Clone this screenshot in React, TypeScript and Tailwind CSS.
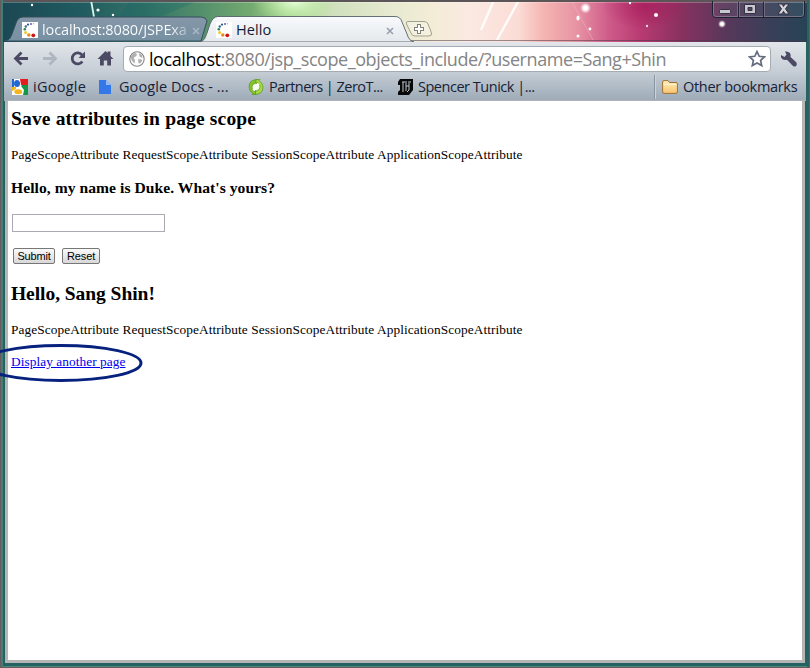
import React from "react";

const ui = "font-['Open_Sans','Noto_Sans',sans-serif] whitespace-nowrap";

function DotsIcon() {
  return (
    <svg width="16" height="16" viewBox="0 0 16 16" className="block shrink-0">
      <rect width="16" height="16" fill="#fff" />
      <circle cx="11.5" cy="1.8" r=".7" fill="#b9a4cc" />
      <circle cx="9" cy="2" r=".9" fill="#5b4b98" />
      <circle cx="6" cy="2.6" r="1.1" fill="#304f91" />
      <circle cx="3.8" cy="4.5" r="1.2" fill="#2b6e88" />
      <circle cx="2.8" cy="7.3" r="1.3" fill="#2c8550" />
      <circle cx="3.6" cy="10.4" r="1.5" fill="#e9cb2c" />
      <circle cx="6.8" cy="13" r="1.7" fill="#e88a18" />
      <circle cx="11.3" cy="13.3" r="1.9" fill="#cc1717" />
    </svg>
  );
}

function ThemeArt() {
  return (
    <svg width="810" height="42" viewBox="0 0 810 42" className="absolute left-0 top-0">
      <defs>
        <linearGradient id="sky" x1="0" x2="1" y1="0" y2="0">
          <stop offset="0" stopColor="#1b4753" />
          <stop offset=".1" stopColor="#205b60" />
          <stop offset=".18" stopColor="#347266" />
          <stop offset=".25" stopColor="#55906c" />
          <stop offset=".31" stopColor="#74aa70" />
          <stop offset=".355" stopColor="#a9d698" />
          <stop offset=".41" stopColor="#cfe0bc" />
          <stop offset=".48" stopColor="#e6e9d0" />
          <stop offset=".53" stopColor="#f3ecd6" />
          <stop offset=".58" stopColor="#fbeae2" />
          <stop offset=".64" stopColor="#fbdcd6" />
          <stop offset=".67" stopColor="#f5b6b2" />
          <stop offset=".715" stopColor="#e690a2" />
          <stop offset=".75" stopColor="#cf5d8b" />
          <stop offset=".79" stopColor="#b93b72" />
          <stop offset=".84" stopColor="#8a3160" />
          <stop offset=".9" stopColor="#55385a" />
          <stop offset=".95" stopColor="#3a3f58" />
          <stop offset="1" stopColor="#244456" />
        </linearGradient>
        <radialGradient id="lime"><stop stopColor="#e3ffd6" /><stop offset="1" stopColor="#b5e88d" stopOpacity="0" /></radialGradient>
        <radialGradient id="rose"><stop stopColor="#a51355" stopOpacity=".6" /><stop offset="1" stopColor="#a51355" stopOpacity="0" /></radialGradient>
        <radialGradient id="spark"><stop offset=".35" stopColor="#fff" /><stop offset="1" stopColor="#fff" stopOpacity="0" /></radialGradient>
      </defs>
      <rect width="810" height="42" fill="url(#sky)" />
      <ellipse cx="295" cy="2" rx="42" ry="22" fill="url(#lime)" />
      <ellipse cx="645" cy="6" rx="42" ry="24" fill="url(#rose)" />
      <path d="M130 0L200 0L160 17L120 17Z" fill="#0e6268" opacity=".25" />
      <path d="M91 0L94 17" stroke="#d9f5e5" strokeWidth="1.8" />
      <path d="M494 0L481 30M519 0L497 40" stroke="#fff" strokeWidth="2.4" opacity=".9" />
      <path d="M571 0L593 40" stroke="#f2b7cb" opacity=".5" />
      <g fill="#fff">
        <circle cx="32" cy="5" r="1.2" /><circle cx="98" cy="10" r="1.6" /><circle cx="113" cy="15" r="1.2" />
        <circle cx="585.5" cy="8" r="5.500" fill="url(#spark)" /><ellipse cx="578" cy="18" rx="1.6" ry="2.6" />
        <circle cx="590" cy="29" r="1.4" /><circle cx="578" cy="36" r="1.5" />
        <circle cx="656" cy="15" r="2" /><circle cx="647" cy="26" r="1.2" opacity=".8" />
        <circle cx="630" cy="3" r="1.2" /><circle cx="722" cy="24" r="4" fill="url(#spark)" />
      </g>
      <rect width="810" height="2" fill="#5c5558" />
      <rect y="2" width="810" height="1" fill="#fff" opacity=".25" />
      <rect y="40" x="405" width="401" height="1" fill="#4b3b48" opacity=".55" />
    </svg>
  );
}

function TabShapes() {
  return (
    <svg width="440" height="26" viewBox="0 0 440 26" className="absolute left-0 top-4">
      <defs>
        <linearGradient id="active" x1="0" y1="0" x2="0" y2="1"><stop stopColor="#f8fafc" /><stop offset="1" stopColor="#e4e8ec" /></linearGradient>
        <linearGradient id="idle" x1="0" y1="0" x2="0" y2="1"><stop stopColor="#8597a8" /><stop offset="1" stopColor="#7690a2" /></linearGradient>
      </defs>
      <path d="M5 25C9 24 10 23 12 18L16 7Q18 1 23 1H201Q206 1 207 5L201 25Z" fill="url(#idle)" stroke="#344e5c" />
      <path d="M200 26C205 24 205 22 207 17L210 8Q213 .5 218 .5H395Q400.500 .5 402 6L407 18Q409 25 414 26Z" fill="url(#active)" stroke="#56616a" strokeWidth=".9" />
      <path d="M408 5.500H424Q427 5.500 428 8L431.500 17Q432 20 429 20H415Q412 20 411 17L406.500 8Q405.500 5.500 408 5.500Z" fill="#fff" fillOpacity=".25" stroke="#a2a18d" />
      <path d="M419 8V18M414 13H424" stroke="#828378" strokeWidth="4" />
      <path d="M419 9V17M415 13H423" stroke="#fff" strokeWidth="2" />
    </svg>
  );
}

function CloseX({ color }: { color: string }) {
  return <svg width="8" height="8" viewBox="0 0 8 8" className="block shrink-0"><path d="M1 1L7 7M7 1L1 7" stroke={color} strokeWidth="1.5" /></svg>;
}

function WindowControls() {
  return (
    <svg width="94" height="19" viewBox="0 0 94 19" className="absolute left-[712px] top-0">
      <path d="M.5 1V14Q.5 17.500 4 17.500H89Q92.500 17.500 92.500 14V1" fill="#fff" fillOpacity=".06" stroke="#1e2033" />
      <path d="M1.500 2V14Q1.500 16.500 4 16.500H89Q91.500 16.500 91.500 14V2" fill="none" stroke="#a99cab" strokeOpacity=".5" />
      <path d="M26.500 2V17M51.500 2V17" stroke="#252539" /><path d="M27.500 2V16M52.500 2V16M25.500 2V16" stroke="#a99cab" strokeOpacity=".4" />
      <rect x="7.500" y="9.500" width="11" height="4" rx="1" fill="#c8c8cc" stroke="#343047" />
      <path d="M32.500 4.500H43.500V13.500H32.500ZM36 7.500V10.500H40V7.500Z" fill="#c8c8cc" fillRule="evenodd" stroke="#343047" />
      <path d="M66 4H70L71.500 6.500L73 4H77L73.500 8.800L77 14H73L71.500 11.300L70 14H66L69.500 8.800Z" fill="#d3d3d6" stroke="#343047" />
    </svg>
  );
}

function NavIcons() {
  return (
    <svg width="114" height="24" viewBox="0 0 114 24" className="block shrink-0">
      <g fill="none" strokeWidth="2.800">
        <path d="M12 13.500H24M17.500 7.500L11.500 13.500L17.500 19.500" stroke="#4b4964" />
        <path d="M39 13.500H51M45.500 7.500L51.500 13.500L45.500 19.500" stroke="#b0b6c1" />
        <path d="M78 10A5.500 5.500 0 1 0 78.300 16.500" stroke="#4b4964" />
      </g>
      <path d="M81 6.500V13H74.500L76.500 11L78.500 9Z" fill="#4b4964" />
      <path d="M93.500 14L101.500 6L103.500 8V6.500H106.500V11L109.500 14H107V20.500H103.200V15.500H99.800V20.500H96V14Z" fill="#4b4964" />
    </svg>
  );
}

function GlobeIcon() {
  return (
    <svg width="18" height="18" viewBox="0 0 18 18" className="block shrink-0">
      <circle cx="9" cy="9" r="7.200" fill="#fbfbfb" stroke="#858585" strokeWidth="1.100" />
      <path d="M3 6L5 3.500L8 3L9 5L7.500 6.500L5.500 8L7 10L6.500 13.500L4.500 11.500L3 9ZM11 3L14.500 5.500L14 8L11.500 6.500ZM10 9.500L12.500 9L14.500 10.500L12 13.500L10.500 13Z" fill="#b0b0b0" />
    </svg>
  );
}

function GoogleIcon() {
  return (
    <svg width="16" height="16" viewBox="0 0 16 16" className="block shrink-0">
      <path d="M0 0H16V16H0Z" fill="#fff" />
      <path d="M0 0H2V8H0Z" fill="#2367d3" /><path d="M8 0H16V6H9Z" fill="#e21d20" />
      <path d="M10 6H16V16H11L12 11L9 7Z" fill="#159846" /><path d="M0 8H4V10L0 12Z" fill="#f6b51d" />
      <ellipse cx="5" cy="4.500" rx="3" ry="3.500" fill="#2367d3" />
      <ellipse cx="6.200" cy="12.800" rx="3.900" ry="2.500" fill="#f6b51d" />
    </svg>
  );
}

function DocIcon() {
  return <svg width="12" height="14" viewBox="0 0 12 14" className="block shrink-0"><path d="M0 0H7L12 5V14H0Z" fill="#3477e8" /><path d="M7 0V5H12Z" fill="#95baf8" /></svg>;
}

function SwirlIcon() {
  return (
    <svg width="16" height="16" viewBox="0 0 16 16" className="block shrink-0">
      <circle cx="8" cy="8" r="6.500" fill="#f1fadd" />
      <path d="M8.500 .500Q1 1 1 8Q1 12 5 14.500L4 15.500H8V11L6.500 12.500Q2.500 9 5 5.500L8.500 3.500Z" fill="#84c32c" stroke="#4e8d12" strokeWidth=".6" />
      <path d="M7.500 15.500Q15 15 15 8Q15 4 11 1.500L12 .500H8V5L9.500 3.500Q13.500 7 11 10.500L7.500 12.500Z" fill="#a4da45" stroke="#4e8d12" strokeWidth=".6" />
      <path d="M5.500 11.500L10.500 4.500" stroke="#fff" strokeWidth="2.500" />
    </svg>
  );
}

function BlackletterIcon() {
  return (
    <svg width="15" height="16" viewBox="0 0 15 16" className="block shrink-0">
      <path d="M2 0H15V11L11 16H0V13L2 11V6H0V3Z" fill="#080808" />
      <path d="M4 3H7M5 3V11M4 12H6M8 2V12M8 7H11M11 4V11L9 13M10 3H13" fill="none" stroke="#bbc6cf" strokeWidth="1" />
    </svg>
  );
}

function FolderIcon() {
  return (
    <svg width="16" height="14" viewBox="0 0 16 14" className="block shrink-0">
      <defs><linearGradient id="folder" x1="0" y1="0" x2="0" y2="1"><stop stopColor="#fff0bd" /><stop offset="1" stopColor="#f7c36d" /></linearGradient></defs>
      <path d="M.6 12V2Q.6.600 2 .600H6L7.500 2.500H14Q15.400 2.500 15.400 4V12Q15.400 13.400 14 13.400H2Q.6 13.400.6 12Z" fill="url(#folder)" stroke="#9f7036" /><path d="M1.500 4.500H14.500" stroke="#fff3cd" />
    </svg>
  );
}

function StarIcon() {
  return <svg width="18" height="18" viewBox="0 0 18 18" className="block shrink-0"><path d="M9 1.500L11.200 6.300L16.500 6.900L12.600 10.400L13.700 15.600L9 13L4.300 15.600L5.400 10.400L1.500 6.900L6.800 6.300Z" fill="#fff" stroke="#656b7f" strokeWidth="1.700" /></svg>;
}

function WrenchIcon() {
  return <svg width="18" height="17" viewBox="0 0 18 17" className="block shrink-0"><path d="M5 .500Q8 0 10 2Q11 4 10.500 6L16.500 11.500Q17.500 14 15.500 15.500Q13.500 16 12 14L7 8.800Q3 9.800 1 6.500V4L4.500 6L6.500 3.500Z" fill="#4b4964" /></svg>;
}

export default function App() {
  const attributes = "PageScopeAttribute RequestScopeAttribute SessionScopeAttribute ApplicationScopeAttribute";
  return (
    <div className="relative flex h-[668px] w-[810px] flex-col overflow-hidden bg-[#246361]">
      <header className="relative h-[41px] shrink-0">
        <ThemeArt />
        <TabShapes />
        <WindowControls />
        <div className={`${ui} relative flex h-full items-start pl-[22px] pt-[22px] text-[14.5px] leading-4`}>
          <div className="flex w-[194px] items-start">
            <DotsIcon />
            <span className="ml-1 block w-[148px] bg-gradient-to-r from-white from-86% to-[#a0afbd] bg-clip-text tracking-[-0.12px] text-transparent">localhost:8080/JSPExa</span>
            <span className="ml-[2px] mt-[5px]"><CloseX color="#a9b8c6" /></span>
          </div>
          <div className="flex w-[180px] items-start">
            <DotsIcon />
            <span className="ml-1 w-[150px] tracking-[0.1px] text-[#111d34]">Hello</span>
            <span className="mt-[5px]"><CloseX color="#939eab" /></span>
          </div>
        </div>
      </header>

      <div className="ml-1 flex h-[60px] w-[802px] shrink-0 flex-col border-b border-[#aeb0ba] bg-gradient-to-b from-[#e3e7eb] via-[#c7ced6] to-[#9eacb8]">
        <div className="flex h-[35px] items-start pt-[5px]">
          <div className="-mt-px"><NavIcons /></div>
          <div className="ml-[5px] flex h-[26px] w-[648px] items-center rounded border border-[#a3abb3] bg-white px-[4px]">
            <GlobeIcon />
            <span className={`${ui} ml-[3px] grow text-[18px] leading-6 tracking-[-0.43px] text-[#848484]`}><span className="text-black">localhost</span>:8080/jsp_scope_objects_include/?username=Sang+Shin</span>
            <StarIcon />
          </div>
          <div className="ml-[9px] mt-[5px]"><WrenchIcon /></div>
        </div>
        <nav className={`${ui} -mt-px flex h-[24px] items-center pl-2 text-[14.5px] leading-5 text-[#172138]`}>
          <div className="flex w-[87px] items-center gap-[5px]"><GoogleIcon /><span className="tracking-[0.25px]">iGoogle</span></div>
          <div className="flex w-[149px] items-center gap-[8px]"><DocIcon /><span className="tracking-[0.08px]">Google Docs - ...</span></div>
          <div className="flex w-[150px] items-center gap-[5px]"><SwirlIcon /><span className="tracking-[-0.52px]">Partners | ZeroT...</span></div>
          <div className="flex w-[256px] items-center gap-[5px]"><BlackletterIcon /><span className="tracking-[-0.48px]">Spencer Tunick |...</span></div>
          <div className="flex h-full items-center gap-[5px] border-l border-[#8997a4] pl-[7px] shadow-[inset_1px_0_#cbd2d8]"><FolderIcon /><span className="tracking-[-0.32px]">Other bookmarks</span></div>
        </nav>
      </div>

      <main className="ml-[5px] h-[562px] w-[800px] shrink-0 border-x-[3px] border-b-[3px] border-[#b5b5b5] bg-white pl-[3px] font-['Liberation_Serif',serif] text-black">
        <h2 className="pt-[7px] text-[19.5px] font-bold leading-[22px] tracking-[0.16px]">Save attributes in page scope</h2>
        <p className="mt-[17px] text-[13.333px] leading-[16px] tracking-[0.08px]">{attributes}</p>
        <h3 className="mt-[16px] text-[15.6px] font-bold leading-[18px] tracking-[0.05px]">Hello, my name is Duke. What's yours?</h3>
        <form onSubmit={(event) => event.preventDefault()}>
          <input className="ml-px mt-[17px] block h-[18px] w-[153px] border border-[#aaaab2] outline-none" aria-label="Name" />
          <div className="ml-[2px] mt-4 flex gap-[7px] font-['Liberation_Sans',sans-serif] text-[11px] leading-[14px]">
            <button className="h-4 w-[42px] rounded-[2px] border border-[#777] bg-gradient-to-b from-[#fafafa] to-[#d8d8d8] tracking-[-0.2px]">Submit</button>
            <button type="reset" className="h-4 w-[38px] rounded-[2px] border border-[#777] bg-gradient-to-b from-[#fafafa] to-[#d8d8d8] tracking-[-0.1px]">Reset</button>
          </div>
        </form>
        <h2 className="mt-[19px] text-[19.500px] font-bold leading-[22px] tracking-[-0.05px]">Hello, Sang Shin!</h2>
        <p className="mt-[17px] text-[13.333px] leading-[16px] tracking-[0.08px]">{attributes}</p>
        <a href="#" className="mt-4 block w-fit text-[13.333px] leading-4 tracking-[0.06px] text-[#0000ee] underline">Display another page</a>
      </main>

      <div className="pointer-events-none absolute inset-0 border-x border-b border-[#655c60] shadow-[inset_2px_0_#407e78,inset_-2px_0_#2b6261,inset_0_-1px_#4c8681]" />
      <svg width="150" height="44" viewBox="0 0 150 44" className="pointer-events-none absolute left-0 top-[341px]">
        <ellipse cx="61" cy="22" rx="80" ry="17.500" fill="none" stroke="#07217f" strokeWidth="3" />
      </svg>
    </div>
  );
}
